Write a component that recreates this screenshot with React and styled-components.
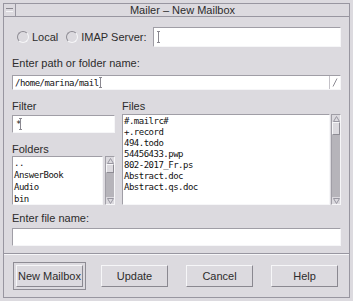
import React from "react";
import styled, { createGlobalStyle } from "styled-components";

const BG = "#dcdadf";
const DARK = "#9896a0";
const LIGHT = "#f6f6f8";
const TEXT = "#2c2c2c";

const Global = createGlobalStyle`
  html, body { margin: 0; padding: 0; background: ${BG}; }
  body { width: 353px; height: 301px; overflow: hidden; font-family: "Liberation Sans", Arial, sans-serif; }
  * { box-sizing: border-box; }
`;

const Page = styled.div`
  padding: 3px 0 0 3px;
`;

const Window = styled.div`
  width: 347px;
  border: 1px solid ${DARK};
  background: ${BG};
  display: flex;
  flex-direction: column;
`;

const TitleBar = styled.div`
  height: 13px;
  display: flex;
  border-bottom: 1px solid ${DARK};
`;

const MenuButton = styled.div`
  width: 12px;
  border-right: 1px solid ${DARK};
  display: flex;
  align-items: center;
  justify-content: center;
  &::before {
    content: "";
    width: 7px;
    height: 2px;
    border-top: 1px solid #8a8890;
    border-bottom: 1px solid ${LIGHT};
  }
`;

const Title = styled.div`
  flex: 1;
  text-align: center;
  font-size: 11px;
  line-height: 12px;
  color: ${TEXT};
`;

const Body = styled.div`
  padding: 0 8px;
  display: flex;
  flex-direction: column;
`;

const RadioRow = styled.div`
  margin-top: 10px;
  height: 20px;
  display: flex;
  align-items: center;
  padding-left: 5px;
`;

const RadioCircle = styled.span`
  width: 12px;
  height: 12px;
  border-radius: 50%;
  border: 1px solid;
  border-color: #8e8c94 ${LIGHT} ${LIGHT} #8e8c94;
  margin-right: 3px;
  flex: none;
`;

const RadioLabel = styled.span`
  font-size: 11px;
  color: ${TEXT};
  margin-right: ${(p) => p.$gap}px;
`;

const TextField = styled.div`
  flex: ${(p) => (p.$grow ? 1 : "none")};
  height: ${(p) => p.$h}px;
  background: #fff;
  border: 1px solid;
  border-color: #a09ea6 ${LIGHT} ${LIGHT} #a09ea6;
  display: flex;
  align-items: center;
  padding-left: 2px;
  margin-top: ${(p) => p.$mt || 0}px;
  font-family: "DejaVu Sans Mono", "Liberation Mono", monospace;
  font-size: 9px;
  letter-spacing: -0.5px;
  color: #111;
  position: relative;
`;

const Caret = styled.span`
  display: inline-block;
  width: 3px;
  height: ${(p) => p.$h || 12}px;
  margin-left: ${(p) => p.$ml || 0}px;
  position: relative;
  &::before {
    content: "";
    position: absolute;
    left: 1px;
    top: 0;
    bottom: 0;
    width: 1px;
    background: #8a8890;
  }
  &::after {
    content: "";
    position: absolute;
    left: 0;
    right: 0;
    top: 0;
    bottom: 0;
    border-top: 1px solid #8a8890;
    border-bottom: 1px solid #8a8890;
  }
`;

const ComboArrow = styled.div`
  position: absolute;
  right: 0;
  top: 0;
  bottom: 0;
  width: 11px;
  border-left: 1px solid #c4c2c8;
  display: flex;
  align-items: center;
  justify-content: center;
`;

const Label = styled.div`
  font-size: 11px;
  color: ${TEXT};
  height: ${(p) => p.$h || 14}px;
  line-height: ${(p) => p.$h || 14}px;
  margin-top: ${(p) => p.$mt || 0}px;
`;

const Middle = styled.div`
  margin-top: 9px;
  display: grid;
  grid-template-columns: 103px 1fr;
  column-gap: 7px;
`;

const Column = styled.div`
  display: flex;
  flex-direction: column;
`;

const ListArea = styled.div`
  display: flex;
  height: ${(p) => p.$h}px;
  gap: ${(p) => p.$gap}px;
`;

const List = styled.div`
  flex: 1;
  background: #fff;
  border: 1px solid;
  border-color: #a09ea6 ${LIGHT} ${LIGHT} #a09ea6;
  padding: ${(p) => p.$pt || 0}px 0 0 1px;
  overflow: hidden;
  font-family: "DejaVu Sans Mono", "Liberation Mono", monospace;
  font-size: 9px;
  letter-spacing: -0.5px;
  color: #111;
`;

const ListItem = styled.div`
  height: ${(p) => p.$lh}px;
  line-height: ${(p) => p.$lh}px;
  white-space: nowrap;
`;

const ScrollBar = styled.div`
  width: 10px;
  display: flex;
  flex-direction: column;
  background: #b6b4ba;
  border: 1px solid;
  border-color: #a09ea6 ${LIGHT} ${LIGHT} #a09ea6;
`;

const ScrollArrow = styled.div`
  height: 7px;
  background: ${BG};
  display: flex;
  align-items: center;
  justify-content: center;
  flex: none;
`;

const Thumb = styled.div`
  height: ${(p) => p.$h}px;
  background: ${BG};
  border: 1px solid;
  border-color: ${LIGHT} #8e8c94 #8e8c94 ${LIGHT};
  flex: none;
`;

const Track = styled.div`
  flex: 1;
`;

const Separator = styled.div`
  margin-top: 7px;
  height: 2px;
  border-top: 1px solid ${DARK};
  border-bottom: 1px solid ${LIGHT};
`;

const ButtonRow = styled.div`
  display: flex;
  justify-content: space-between;
  padding: 10px 11px 10px 12px;
`;

const Button = styled.button`
  width: 67px;
  height: 22px;
  padding: 0;
  background: ${BG};
  border: 1px solid;
  border-color: ${LIGHT} #8a8890 #8a8890 ${LIGHT};
  font-family: "Liberation Sans", Arial, sans-serif;
  font-size: 11px;
  color: ${TEXT};
  box-shadow: ${(p) => (p.$default ? `0 0 0 2px ${BG}, 0 0 0 3px #8e8c94` : "none")};
`;

const Arrow = ({ down }) => (
  <svg width="7" height="6" viewBox="0 0 7 6">
    <polygon
      points={down ? "0.5,0.5 6.5,0.5 3.5,5.5" : "3.5,0.5 6.5,5.5 0.5,5.5"}
      fill="none"
      stroke="#9896a0"
      strokeWidth="1"
    />
  </svg>
);

const Scroll = ({ thumb }) => (
  <ScrollBar>
    <ScrollArrow>
      <Arrow />
    </ScrollArrow>
    <Thumb $h={thumb} />
    <Track />
    <ScrollArrow>
      <Arrow down />
    </ScrollArrow>
  </ScrollBar>
);

const files = [
  "#.mailrc#",
  "+.record",
  "494.todo",
  "54456433.pwp",
  "802-2017_Fr.ps",
  "Abstract.doc",
  "Abstract.qs.doc",
];

const folders = ["..", "AnswerBook", "Audio", "bin"];

export default function App() {
  return (
    <>
      <Global />
      <Page>
        <Window>
          <TitleBar>
            <MenuButton />
            <Title>Mailer – New Mailbox</Title>
          </TitleBar>
          <Body>
            <RadioRow>
              <RadioCircle />
              <RadioLabel $gap={8}>Local</RadioLabel>
              <RadioCircle />
              <RadioLabel $gap={6}>IMAP Server:</RadioLabel>
              <TextField $grow $h={20}>
                <Caret $h={12} $ml={1} />
              </TextField>
            </RadioRow>
            <Label $mt={9} $h={15}>Enter path or folder name:</Label>
            <TextField $h={15} $mt={4}>
              /home/marina/mail
              <Caret $h={11} />
              <ComboArrow>
                <svg width="6" height="9" viewBox="0 0 6 9">
                  <line x1="1" y1="8.5" x2="5" y2="0.5" stroke="#8e8c94" strokeWidth="1" />
                </svg>
              </ComboArrow>
            </TextField>
            <Middle>
              <Column>
                <Label $h={15}>Filter</Label>
                <TextField $h={18} $mt={1}>
                  <span style={{ marginLeft: 1 }}>*</span>
                  <Caret $h={12} $ml={-2} />
                </TextField>
                <Label $mt={9}>Folders</Label>
                <ListArea $h={49} $gap={2}>
                  <List $pt={0}>
                    {folders.map((f) => (
                      <ListItem key={f} $lh={12}>
                        {f}
                      </ListItem>
                    ))}
                  </List>
                  <Scroll thumb={9} />
                </ListArea>
              </Column>
              <Column>
                <Label $h={15}>Files</Label>
                <ListArea $h={91} $gap={1}>
                  <List $pt={1}>
                    {files.map((f) => (
                      <ListItem key={f} $lh={11}>
                        {f}
                      </ListItem>
                    ))}
                  </List>
                  <Scroll thumb={13} />
                </ListArea>
              </Column>
            </Middle>
            <Label $mt={6}>Enter file name:</Label>
            <TextField $h={18} $mt={3} />
          </Body>
          <Separator />
          <ButtonRow>
            <Button $default>New Mailbox</Button>
            <Button>Update</Button>
            <Button>Cancel</Button>
            <Button>Help</Button>
          </ButtonRow>
        </Window>
      </Page>
    </>
  );
}
